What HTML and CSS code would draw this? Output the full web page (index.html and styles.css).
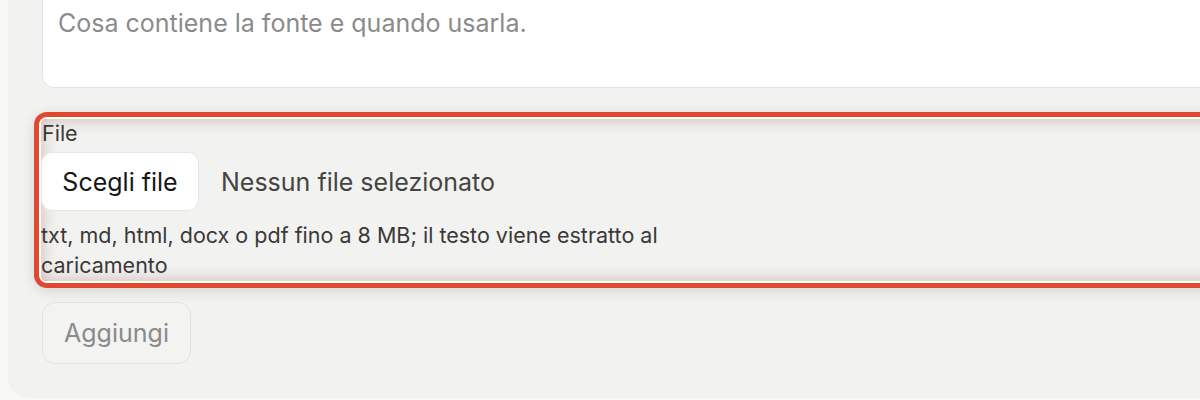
FILE: index.html
```html
<!DOCTYPE html>
<html lang="it">
<head>
<meta charset="utf-8">
<title>Fonte</title>
<link rel="stylesheet" href="styles.css">
</head>
<body>
<div class="page">
  <form class="card">
    <div class="textarea">Cosa contiene la fonte e quando usarla.</div>
    <div class="field highlighted">
      <div class="label">File</div>
      <div class="file-row">
        <span class="file-btn">Scegli file</span>
        <span class="file-name">Nessun file selezionato</span>
      </div>
      <div class="hint">txt, md, html, docx o pdf fino a 8 MB; il testo viene estratto al caricamento</div>
    </div>
    <div class="actions">
      <span class="add-btn">Aggiungi</span>
    </div>
  </form>
</div>
</body>
</html>
```

FILE: styles.css
```css
html, body {
  margin: 0;
  padding: 0;
  background: #f8f8f7;
  overflow: hidden;
  font-family: Inter, "Noto Sans", sans-serif;
}
.page {
  width: 1200px;
  height: 400px;
  overflow: hidden;
}
.card {
  margin-top: -40px;
  margin-left: 8px;
  width: 1260px;
  background: #f2f2f0;
  border-radius: 20px;
  padding: 0 0 34px 34px;
  box-sizing: border-box;
}
.textarea {
  height: 128px;
  box-sizing: border-box;
  background: #ffffff;
  border: 1px solid #e4e4e2;
  border-radius: 12px;
  padding: 47px 15px 0 15px;
  font-size: 25px;
  line-height: 30px;
  color: #8b8b8b;
}
.field {
  margin-top: 31px;
  height: 162px;
  box-sizing: border-box;
  margin-left: -1px;
  display: flex;
  flex-direction: column;
}
.highlighted {
  border-radius: 6px;
  box-shadow:
    inset 0 0 16px rgba(150, 90, 90, 0.4),
    0 0 0 2px #ffffff,
    0 0 0 7px #df4a2f,
    0 3px 14px 6px rgba(0, 0, 0, 0.14);
}
.label {
  padding-top: 2px;
  font-size: 21.5px;
  line-height: 25px;
  color: #3b3838;
  margin-left: 1px;
}
.file-row {
  margin-top: 6px;
  display: flex;
  align-items: center;
  gap: 22px;
}
.file-btn {
  display: flex;
  align-items: center;
  justify-content: center;
  width: 158px;
  height: 59px;
  box-sizing: border-box;
  background: #ffffff;
  border: 1px solid #e6e6e4;
  border-radius: 11px;
  font-size: 25px;
  color: #161616;
}
.file-name {
  font-size: 25px;
  color: #444444;
}
.hint {
  margin-top: 9px;
  max-width: 640px;
  font-size: 21.5px;
  line-height: 30px;
  color: #3b3838;
}
.actions {
  margin-top: 21px;
  display: flex;
}
.add-btn {
  display: flex;
  align-items: center;
  justify-content: center;
  width: 149px;
  height: 62px;
  box-sizing: border-box;
  border: 1px solid #e2e2e0;
  border-radius: 13px;
  background: #f3f3f1;
  font-size: 25px;
  color: #8a8a8a;
}
```
